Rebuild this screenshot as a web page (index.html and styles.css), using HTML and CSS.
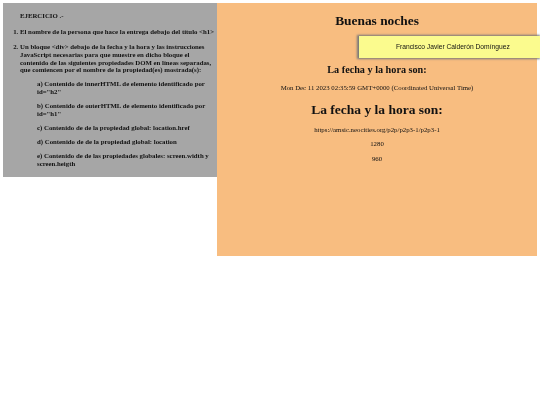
FILE: index.html
```html
<!DOCTYPE html>
<html lang="en">
<head>
    <meta charset="UTF-8">
    <meta name="viewport" content="width=device-width, initial-scale=1.0">
    <title>Ejercicio</title>
    <link rel="stylesheet" href="styles.css">
</head>
<body>
    <div class="page">
        <div class="exercise">
            <p class="exercise-title">EJERCICIO .-</p>
            <ol>
                <li>El nombre de la persona que hace la entrega debajo del título &lt;h1&gt;</li>
                <li>Un bloque &lt;div&gt; debajo de la fecha y la hora y las instrucciones JavaScript necesarias para que muestre en dicho bloque el contenido de las siguientes propiedades DOM en líneas separadas, que comiencen por el nombre de la propiedad(es) mostrada(s):
                    <div class="sub-items">
                        <p>a) Contenido de innerHTML de elemento identificado por id="h2"</p>
                        <p>b) Contenido de outerHTML de elemento identificado por id="h1"</p>
                        <p>c) Contenido de de la propiedad global: location.href</p>
                        <p>d) Contenido de de la propiedad global: location</p>
                        <p>e) Contenido de de las propiedades globales: screen.width y screen.heigth</p>
                    </div>
                </li>
            </ol>
        </div>
        <div class="result">
            <h1>Buenas noches</h1>
            <div class="name-box">Francisco Javier Calderón Domínguez</div>
            <h3>La fecha y la hora son:</h3>
            <p>Mon Dec 11 2023 02:35:59 GMT+0000 (Coordinated Universal Time)</p>
            <h2>La fecha y la hora son:</h2>
            <p>https://amsic.neocities.org/p2p/p2p3-1/p2p3-1</p>
            <p>1280</p>
            <p>960</p>
        </div>
    </div>
</body>
</html>
```

FILE: styles.css
```css
* {
    box-sizing: border-box;
}
body {
    margin: 0;
    padding: 3px;
    background-color: white;
    font-family: "Liberation Serif", serif;
    color: #111;
}
.page {
    display: flex;
    align-items: flex-start;
    will-change: transform;
}
.exercise {
    width: 214px;
    height: 174px;
    padding: 9px 0 0 17px;
    background-color: #a6a6a6;
    font-size: 6.8px;
    line-height: 7.8px;
    font-weight: bold;
}
.exercise p {
    margin: 0;
}
.exercise-title {
    margin-bottom: 8px !important;
}
ol {
    margin: 0;
    padding: 0;
}
li {
    margin-bottom: 7.4px;
}
.sub-items {
    padding-left: 17px;
    padding-top: 6.2px;
}
.sub-items p {
    margin-bottom: 6.2px;
}
.result {
    position: relative;
    width: 320px;
    height: 253px;
    padding-top: 10px;
    background-color: #f8bd80;
    text-align: center;
    font-size: 6.8px;
}
.result h1 {
    margin: 0 0 35px;
    font-size: 13.4px;
    line-height: 16px;
}
.result h3 {
    margin: 0 0 8px;
    font-size: 10.2px;
    line-height: 12px;
}
.result h2 {
    margin: 9px 0 8px;
    font-size: 13.5px;
    line-height: 16px;
}
.result p {
    margin: 0 0 6px;
    line-height: 8.5px;
}
.name-box {
    position: absolute;
    top: 33px;
    left: 142px;
    width: 181px;
    height: 22px;
    padding-left: 37px;
    background-color: #fbfb8e;
    box-shadow: -1px 0 2px 1px #777;
    font-family: "Liberation Sans", sans-serif;
    font-size: 6.7px;
    line-height: 22px;
    text-align: left;
    white-space: nowrap;
}
```
